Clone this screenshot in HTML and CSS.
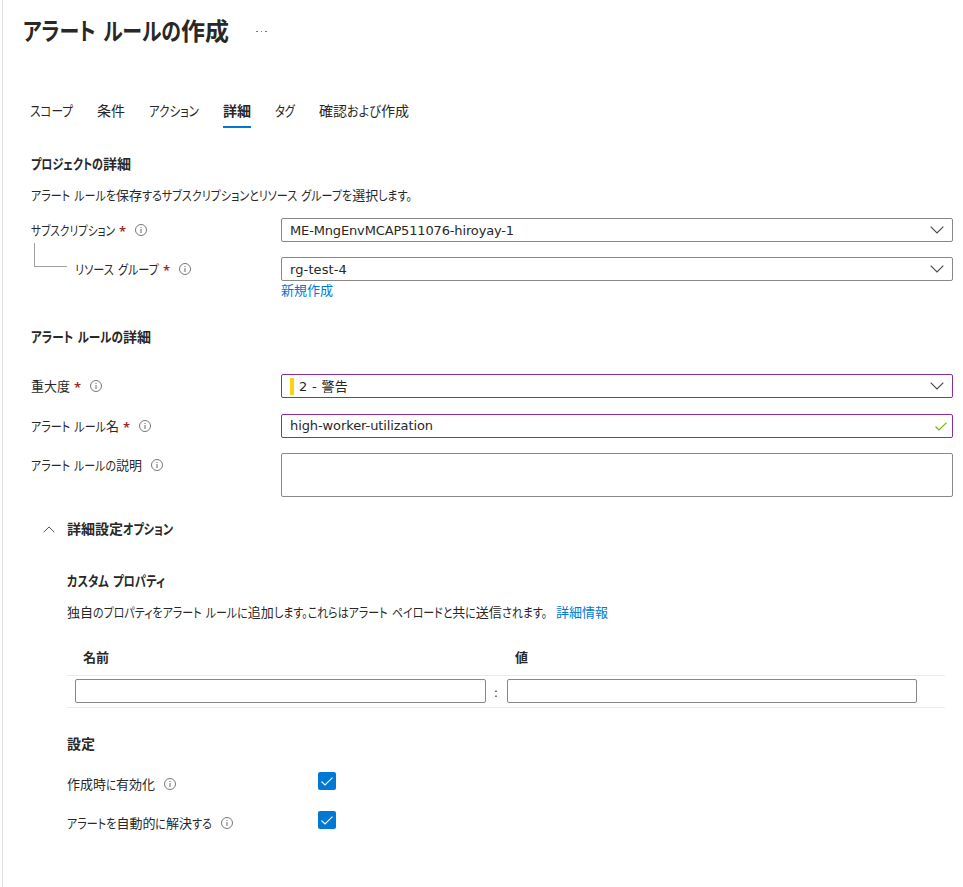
FILE: index.html
```html
<!DOCTYPE html>
<html lang="ja">
<head>
<meta charset="utf-8">
<title>アラート ルールの作成</title>
<link rel="stylesheet" href="styles.css">
</head>
<body>
<svg width="0" height="0" class="defs">
  <symbol id="info" viewBox="0 0 12 12"><circle cx="6" cy="6" r="5.5" fill="none" stroke="#6b6967" stroke-width=".9"/><path d="M6 5v4M6 3v1" stroke="#6b6967" stroke-width="1" fill="none"/></symbol>
  <symbol id="chev" viewBox="0 0 14 8"><path d="M.7.7 7 7 13.3.7" fill="none" stroke="#484644" stroke-width="1.1"/></symbol>
  <symbol id="check" viewBox="0 0 12 9"><path d="M.5 4.5 4 8 11.5.6" fill="none" stroke="currentColor" stroke-width="1.1"/></symbol>
</svg>
<main class="page">
  <header class="title"><h1><span data-w="206">アラート ルールの作成</span></h1><span class="more"><i></i><i></i><i></i></span></header>
  <nav class="tabs">
    <a class="tab"><span data-w="43">スコープ</span></a>
    <a class="tab"><span data-w="28">条件</span></a>
    <a class="tab"><span data-w="50">アクション</span></a>
    <a class="tab active"><span data-w="28">詳細</span></a>
    <a class="tab"><span data-w="20">タグ</span></a>
    <a class="tab"><span data-w="90">確認および作成</span></a>
  </nav>

  <h2 class="project"><span data-w="100">プロジェクトの詳細</span></h2>
  <p class="desc"><span data-w="381">アラート ルールを保存するサブスクリプションとリソース グループを選択します。</span></p>
  <div class="row r-sub">
    <label class="label"><span data-w="84">サブスクリプション</span><b class="req">*</b><svg class="info"><use href="#info"/></svg></label>
    <div class="field"><span class="value account">ME-MngEnvMCAP511076-hiroyay-1</span><svg class="chev"><use href="#chev"/></svg></div>
  </div>
  <div class="row r-group">
    <label class="label child"><i class="branch"></i><span data-w="84">リソース グループ</span><b class="req">*</b><svg class="info"><use href="#info"/></svg></label>
    <div class="field"><span class="value group">rg-test-4</span><svg class="chev"><use href="#chev"/></svg></div>
  </div>
  <a class="new">新規作成</a>

  <h2 class="rule"><span data-w="120">アラート ルールの詳細</span></h2>
  <div class="row r-sev">
    <label class="label"><span>重大度</span><b class="req">*</b><svg class="info"><use href="#info"/></svg></label>
    <div class="field edited"><i class="sev"></i><span class="value level">2 - 警告</span><svg class="chev"><use href="#chev"/></svg></div>
  </div>
  <div class="row r-name">
    <label class="label"><span data-w="88">アラート ルール名</span><b class="req">*</b><svg class="info"><use href="#info"/></svg></label>
    <div class="field edited"><span class="value name">high-worker-utilization</span><svg class="valid"><use href="#check"/></svg></div>
  </div>
  <div class="row r-desc">
    <label class="label"><span data-w="111">アラート ルールの説明</span><svg class="info"><use href="#info"/></svg></label>
    <div class="field area"></div>
  </div>

  <div class="accordion"><svg class="up"><use href="#chev"/></svg><h2><span data-w="106">詳細設定オプション</span></h2></div>
  <section class="advanced">
    <h2 class="custom"><span data-w="98">カスタム プロパティ</span></h2>
    <p class="desc"><span data-w="480">独自のプロパティをアラート ルールに追加します。これらはアラート ペイロードと共に送信されます。</span><a class="link">詳細情報</a></p>
    <div class="props">
      <div class="thead"><b>名前</b><b>値</b></div>
      <div class="trow"><div class="field"></div><span class="colon">:</span><div class="field"></div></div>
    </div>
    <h2 class="settings">設定</h2>
    <div class="opt"><label class="label"><span data-w="88">作成時に有効化</span><svg class="info"><use href="#info"/></svg></label><span class="box"><svg><use href="#check"/></svg></span></div>
    <div class="opt"><label class="label"><span data-w="145">アラートを自動的に解決する</span><svg class="info"><use href="#info"/></svg></label><span class="box"><svg><use href="#check"/></svg></span></div>
  </section>
</main>
<script src="kana.js"></script>
</body>
</html>
```
FILE: kana.js
```js
// Condenses the kana of each label to its data-w width; kanji keep their full width.
document.querySelectorAll('[data-w]').forEach(el => {
  const runs = el.textContent.match(/[\u3001-\u30ff ]+|[^\u3001-\u30ff ]+/g);
  el.textContent = '';
  const spans = runs.map(text => {
    const s = document.createElement('span');
    s.textContent = text;
    if (/[\u3001-\u30ff]/.test(text)) s.className = 'kana';
    el.append(s);
    return s;
  });
  const kana = spans.filter(s => s.className);
  const sizes = kana.map(s => s.getBoundingClientRect().width);
  const total = spans.reduce((n, s) => n + s.getBoundingClientRect().width, 0);
  const sum = sizes.reduce((a, b) => a + b, 0);
  if (!sum) return;
  const scale = (el.dataset.w - (total - sum)) / sum;
  kana.forEach((s, i) => {
    s.style.transform = `scaleX(${scale})`;
    s.style.marginRight = `${sizes[i] * (scale - 1)}px`;
  });
});
```
FILE: styles.css
```css
* { box-sizing: border-box; }
body { margin: 0; background: #fff; color: #292827; font: 13px/20px "Noto Sans CJK JP", sans-serif; font-feature-settings: "palt"; }
.defs { position: absolute; }
svg { display: block; flex: none; }
h1, h2, p { margin: 0; white-space: nowrap; }
h2 { font-size: 14px; line-height: 18px; padding-bottom: 2px; font-weight: 600; }
span { white-space: nowrap; }
.kana { display: inline-block; white-space: pre; transform-origin: left; word-spacing: .15em; }
.page { min-height: 887px; margin-left: 2px; border-left: 1px solid #e1dfdd; padding: 15px 10px 0 28px; }
.title { display: flex; align-items: center; height: 30px; margin-left: -8px; }
h1 { font-size: 24px; line-height: 30px; font-weight: 600; }
.more { display: flex; gap: 3px; margin: 3px 0 0 27px; }
.more i { width: 1.5px; height: 1.5px; background: #797775; }
.tabs { display: flex; gap: 24px; margin: 55px 0 0 -1px; font-size: 14px; line-height: 20px; }
.tab { height: 28px; border-bottom: 2px solid transparent; }
.tab.active { border-color: #0078d4; font-weight: 600; }
.project { margin-top: 26px; }
.desc { margin-top: 11px; }
.row { display: flex; }
.r-sub { margin-top: 13px; }
.r-group, .r-desc { margin-top: 15px; }
.r-sev { margin-top: 27px; }
.r-name { margin-top: 16px; }
.label { display: flex; align-items: center; width: 250px; height: 24px; flex: none; }
.req { color: #a4262c; font: 600 13px/20px "Noto Sans", sans-serif; width: 7px; margin: 1px 0 0 4px; }
.info { width: 12px; height: 12px; margin-left: 9px; }
.branch { width: 33px; height: 24px; margin: -28px 8px 0 3px; border: solid #a19f9d; border-width: 0 0 1px 1px; }
.field { display: flex; align-items: center; flex: 1; height: 24px; border: 1px solid #8a8886; border-radius: 2px; padding: 0 8px; }
.value { font-family: "DejaVu Sans", "Noto Sans CJK JP", sans-serif; padding-top: 1px; }
.account { letter-spacing: -.148px; }
.group { letter-spacing: .11px; }
.level { letter-spacing: .29px; }
.name { letter-spacing: -.092px; padding: 0; }
.edited { border-color: #8a2da5; }
.area { height: 44px; }
.chev { width: 14px; height: 8px; margin-left: auto; }
.valid { width: 12px; height: 9px; margin: 0 -3px 0 auto; color: #6bb700; }
.sev { width: 4px; height: 17px; margin-right: 5px; background: #fcd116; }
.new { display: block; margin-left: 250px; line-height: 18px; color: #0078d4; }
.rule { margin-top: 28px; }
.accordion { display: flex; align-items: center; margin-top: 22px; }
.up { width: 12px; height: 7px; margin: 0 12px; transform: rotate(180deg); }
.advanced { padding: 32px 8px 0 36px; }
.link { color: #0078d4; margin-left: 9px; }
.props { margin-top: 17px; }
.thead { display: grid; grid-template-columns: 432px 1fr; padding-left: 16px; height: 37px; line-height: 36px; border-bottom: 1px solid #edebe9; }
.trow { display: flex; padding: 3px 28px 4px 8px; border-bottom: 1px solid #edebe9; }
.colon { width: 21px; height: 24px; text-align: center; line-height: 27px; color: #6b2d2d; font-family: "DejaVu Sans", sans-serif; }
.settings { margin: 26px 0 18px; }
.opt { display: flex; margin-bottom: 15px; }
.opt .label { width: 251px; }
.box { display: flex; align-items: center; justify-content: center; width: 18px; height: 18px; border-radius: 2px; background: #0078d4; color: #fff; }
.box svg { width: 12px; height: 9px; }
```
